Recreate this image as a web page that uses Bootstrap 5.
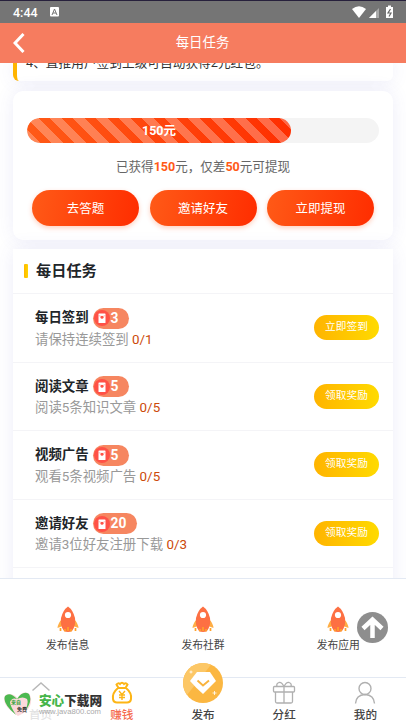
<!DOCTYPE html>
<html lang="zh-CN">
<head>
<meta charset="utf-8">
<meta name="viewport" content="width=device-width, initial-scale=1">
<title>每日任务</title>
<link href="https://cdn.jsdelivr.net/npm/bootstrap@5.3.0/dist/css/bootstrap.min.css" rel="stylesheet">
<style>
body{font-family:Roboto,"Noto Sans CJK SC",sans-serif;height:721px;overflow:hidden;background:#fff;color:#212529;line-height:1.2}
.statusbar{height:23px;background:#757575;border-top:1px solid #27203c;padding:0 12px 0 13px;font-size:12.5px;font-weight:500;color:#fff}
.titlebar{height:40px;background:#f67c5f;color:#fff;font-size:13.4px;padding-left:13px}
.titlebar .spacer{width:26px}
.feed{height:515px;padding:0 13.5px 0 13px;background:#fff}
.panel{background:#fff;border-radius:10px;box-shadow:0 0 18px rgba(80,80,200,.1)}
.rules{display:flow-root;height:18px;margin-bottom:10px;border-left:4px solid #ffb400;border-radius:0 0 6px 6px;padding-left:9px;font-size:12.7px;color:#333}
.rules p{margin-top:-8px;line-height:16px}
.earn{height:149px;margin-bottom:9px;padding:27px 13.5px 0 14px}
.earn .progress{height:25px;border-radius:13px;background:#f4f4f4}
.earn .progress-bar{border-radius:13px;font-size:12.5px;font-weight:700;background-color:transparent;background-image:linear-gradient(45deg,rgba(255,255,255,.28) 25%,transparent 25%,transparent 50%,rgba(255,255,255,.28) 50%,rgba(255,255,255,.28) 75%,transparent 75%),linear-gradient(90deg,#ff5a17,#ff2f00);background-size:23px 23px,100% 100%}
.summary{font-size:12.55px;color:#666;line-height:18px;margin:15px 0 14px}
.summary b{color:#ff5a17}
.actions{gap:10.5px;padding:0 5px}
.cta{flex:1 1 0;height:36px;border-radius:18px;border:0;color:#fff;font-size:12.5px;padding:0;background:linear-gradient(100deg,#ff5a17,#ff2d00);box-shadow:0 2px 5px rgba(255,70,0,.25)}
.tasks{border-radius:0;height:345px}
.taskhead{height:45px;font-size:15.2px;font-weight:700;padding-left:11px;gap:8px;border-bottom:1px solid #f4f4f7}
.tick{width:4px;height:14px;border-radius:1px;background:linear-gradient(90deg,#ffb800,#ffd500)}
.task{height:68.5px;padding:0 13.5px 0 22px;border-bottom:1px solid #f4f4f7}
.task h2{font-size:13.4px;font-weight:700;margin:0}
.task p{font-size:13.4px;line-height:19px;color:#999;margin:1px 0 0}
.task p span{color:#cc4a0a}
.task>div{padding-top:1px}
.reward{height:21px;border-radius:11px;background:#f68660;color:#fff;font-size:13.8px;font-weight:700;padding:0 11px 0 1px;gap:1px;margin-left:4px}
.claim{width:65px;height:25px;border-radius:13px;border:0;padding:0;font-size:10.7px;color:#fff;background:linear-gradient(90deg,#ffb400,#ffda00)}
.publish{height:99px;border-top:1px solid #e3e9f3;background:#fff;padding-top:27px;font-size:10.8px;color:#444}
.publish svg{margin-bottom:7px}
.tabs{height:44px;border-top:1px solid #e3e9f3;background:#fff;font-size:11.6px;font-weight:500;color:#444}
.tab{flex:1 1 0;padding-top:3px}
.tab svg{width:24px;height:24px;flex:none;margin-bottom:4px}
.tab .gem{width:40px;height:40px;margin-top:-18px;margin-bottom:6px}
.tab.on{color:#f56c50}
.faint{opacity:.15}
.totop{position:absolute;left:357px;top:612px}
.mark-logo{position:absolute;left:0;top:689px;width:104px;height:31px;gap:7px;padding-left:3px}
.brandname{font-size:12.6px;line-height:15px;font-weight:900;color:#333}
.brandname span{color:#45b549}
.brandurl{font-family:"Liberation Sans",sans-serif;font-size:7.7px;line-height:8px;color:#aaa}
</style>
<script src="https://cdn.jsdelivr.net/npm/bootstrap@5.3.0/dist/js/bootstrap.bundle.min.js"></script>
</head>
<body class="position-relative">
<svg width="0" height="0" class="position-absolute">
  <symbol id="rocket" viewBox="0 0 22 27">
    <path d="M5 13Q1 17 .5 22L6 20zM17 13Q21 17 21.500 22L16 20z" fill="#ffae45"/>
    <path d="M11 .5Q16 4 18 12Q19 20 15 25Q11 27 7 25Q3 20 4 12Q6 4 11 .5z" fill="#fd7043"/>
    <circle cx="11" cy="9" r="3.100" fill="#fff"/>
    <path d="M3.500 22v3M18.500 22v3M8 23v2.500M14 23v2.500M11 21v4" stroke="#ffa22b" stroke-width="1.700"/>
  </symbol>
  <symbol id="packet" viewBox="0 0 16 16">
    <circle cx="8" cy="8" r="8" fill="#ff5146"/>
    <rect x="4.500" y="3.500" width="7" height="9.500" rx=".6" fill="#fff"/>
    <path d="M4.500 5.500Q8 8 11.500 5.500" fill="none" stroke="#ff9a8e" stroke-width=".7"/>
    <circle cx="8" cy="7.200" r="1.500" fill="#ff5146"/>
  </symbol>
</svg>

<div class="statusbar d-flex align-items-center">
  <span>4:44</span>
  <svg class="ms-2" width="17" height="10" viewBox="0 0 17 10"><rect x="4" width="9" height="9.500" rx="1" fill="#fff"/><path d="M6 8L8.500 2L11 8M7 6h3" fill="none" stroke="#757575"/></svg>
  <svg class="ms-auto" width="42" height="14" viewBox="0 0 42 14">
    <path d="M0 4Q7 -1.500 14 4L7 13z" fill="#fff"/>
    <path d="M17 13L27 3V13z" fill="#aaa"/><path d="M17 13L24 6V13z" fill="#fff"/>
    <path d="M34 2h2V.5h3V2h2v11h-7z" fill="#fff"/><path d="M38.500 4L36 8h3L37 11.500" fill="none" stroke="#666" stroke-width="1.200"/>
  </svg>
</div>
<header class="titlebar d-flex align-items-center">
  <svg width="12" height="20" viewBox="0 0 12 20"><path d="M10.500 1L2 10L10.500 19" fill="none" stroke="#fff" stroke-width="3"/></svg>
  <div class="flex-fill text-center">每日任务</div><span class="spacer"></span>
</header>

<main class="feed overflow-hidden">
  <section class="panel rules"><p class="mb-0">4、直推用户签到上级可自动获得2元红包。</p></section>
  <section class="panel earn">
    <div class="progress"><div class="progress-bar w-75">150元</div></div>
    <p class="summary text-center">已获得<b>150</b>元，仅差<b>50</b>元可提现</p>
    <div class="actions d-flex">
      <button class="cta">去答题</button><button class="cta">邀请好友</button><button class="cta">立即提现</button>
    </div>
  </section>
  <section class="panel tasks">
    <div class="taskhead d-flex align-items-center"><span class="tick"></span>每日任务</div>
    <div class="task d-flex align-items-center justify-content-between">
      <div><h2 class="d-flex align-items-center">每日签到<span class="reward d-flex align-items-center"><svg width="16" height="16"><use href="#packet"/></svg>3</span></h2><p>请保持连续签到 <span>0/1</span></p></div>
      <button class="claim">立即签到</button>
    </div>
    <div class="task d-flex align-items-center justify-content-between">
      <div><h2 class="d-flex align-items-center">阅读文章<span class="reward d-flex align-items-center"><svg width="16" height="16"><use href="#packet"/></svg>5</span></h2><p>阅读5条知识文章 <span>0/5</span></p></div>
      <button class="claim">领取奖励</button>
    </div>
    <div class="task d-flex align-items-center justify-content-between">
      <div><h2 class="d-flex align-items-center">视频广告<span class="reward d-flex align-items-center"><svg width="16" height="16"><use href="#packet"/></svg>5</span></h2><p>观看5条视频广告 <span>0/5</span></p></div>
      <button class="claim">领取奖励</button>
    </div>
    <div class="task d-flex align-items-center justify-content-between">
      <div><h2 class="d-flex align-items-center">邀请好友<span class="reward d-flex align-items-center"><svg width="16" height="16"><use href="#packet"/></svg>20</span></h2><p>邀请3位好友注册下载 <span>0/3</span></p></div>
      <button class="claim">领取奖励</button>
    </div>
  </section>
</main>

<section class="publish d-flex text-center">
  <div class="col-4 d-flex flex-column align-items-center"><svg width="22" height="27"><use href="#rocket"/></svg>发布信息</div>
  <div class="col-4 d-flex flex-column align-items-center"><svg width="22" height="27"><use href="#rocket"/></svg>发布社群</div>
  <div class="col-4 d-flex flex-column align-items-center"><svg width="22" height="27"><use href="#rocket"/></svg>发布应用</div>
</section>

<nav class="tabs d-flex">
  <div class="tab d-flex flex-column align-items-center"><svg viewBox="0 0 24 24" fill="none" stroke="#b8b8b8" stroke-width="1.500"><path d="M3.500 9.500L12 2L20.500 9.500"/></svg><span class="faint">首页</span></div>
  <div class="tab on d-flex flex-column align-items-center"><svg viewBox="0 0 24 24" fill="none" stroke="#fdb515" stroke-width="2"><path d="M8 7Q2 12 3 18Q3.500 21.500 7 21.500H17Q20.500 21.500 21 18Q22 12 16 7zM8.500 7L6.500 3.500Q8 1.500 10 3Q12 .5 14 3Q16 1.500 17.500 3.500L15.500 7"/><path d="M9 10L12 13.500L15 10M12 13.500V19M9 14H15M9 16.500H15" stroke-width="1.400"/></svg>赚钱</div>
  <div class="tab d-flex flex-column align-items-center"><svg class="gem" viewBox="0 0 40 40"><circle cx="20" cy="20" r="20" fill="#fbb742"/><path d="M0 20A20 20 0 0 1 28 1.700L4 32Q0 26 0 20z" fill="#fcc766"/><path d="M14 9H27Q29 12 33 18L20 31Q14 26 7 18Q10 14 14 9z" fill="#fff"/><path d="M14.500 17.500L20 22.500L26 17.500" fill="none" stroke="#f9b33d" stroke-width="1.900"/><path d="M8 7.500v3M6.500 9h3M31.500 28v4M29.500 30h4" stroke="#fff" stroke-width=".8"/></svg>发布</div>
  <div class="tab d-flex flex-column align-items-center"><svg viewBox="0 0 24 24" fill="none" stroke="#b0b0b0" stroke-width="1.300"><rect x="1.500" y="5.500" width="21" height="5.500" rx="1"/><path d="M3.500 11V20.500Q3.500 22 5 22H19Q20.500 22 20.500 20.500V11M12 6V22M12 6Q10 1 7 1.500Q4 2.500 5 5.500M12 6Q14 1 17 1.500Q20 2.500 19 5.500"/></svg>分红</div>
  <div class="tab d-flex flex-column align-items-center"><svg viewBox="0 0 24 24" fill="none" stroke="#b0b0b0" stroke-width="1.400"><circle cx="12" cy="7.500" r="6"/><path d="M2.500 22.500Q3 14 12 13.500Q21 14 21.500 22.500"/></svg>我的</div>
</nav>

<svg class="totop" width="31" height="31" viewBox="0 0 31 31"><circle cx="15.500" cy="15.500" r="15.500" fill="#8e8e8e"/><path d="M6 16.500L15.500 7.500L25 16.500M15.500 9V26" fill="none" stroke="#fff" stroke-width="4.500"/></svg>

<div class="mark-logo d-flex align-items-center">
  <svg width="29" height="27" viewBox="0 0 29 27" class="flex-shrink-0"><path d="M14.500 7Q19 0 25 2Q30 6 27 15Q24 21 15 25Q2 17 1 9Q1 3 6 3Q11 3 14.500 7z" fill="#fbd9dc"/><path d="M14 8Q7 .5 2 5Q-1 12 13 24Q7 15 7 11Q9 6 14 8zM14 8Q20 -1 26 3Q30 10 22 20Q26 12 24 8Q20 5 14 8z" fill="#4cb950"/><text x="8" y="13" font-size="5" font-weight="700" fill="#35a43a">来自</text><text x="14" y="20" font-size="5" font-weight="700" fill="#333">免费</text></svg>
  <div><div class="brandname text-nowrap"><span>安心</span>下载网</div><div class="brandurl">www.java800.com</div></div>
</div>
</body>
</html>
